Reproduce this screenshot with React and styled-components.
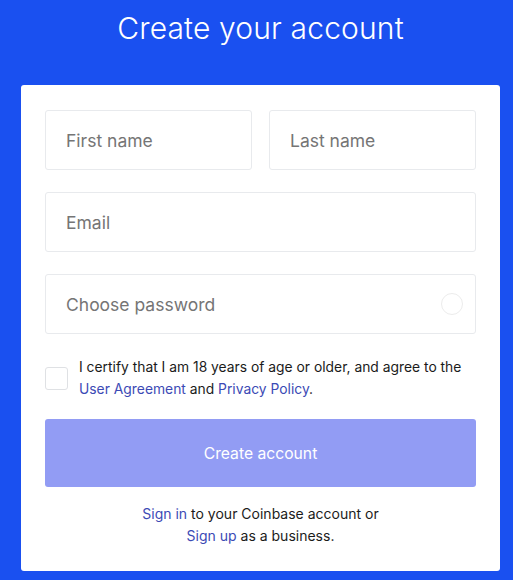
import React from "react";
import styled, { createGlobalStyle } from "styled-components";

const GlobalStyle = createGlobalStyle`
  html, body {
    margin: 0;
    padding: 0;
    background: #1a50f0;
    font-family: "Inter", "Liberation Sans", sans-serif;
  }
`;

const Page = styled.div`
  width: 513px;
  height: 580px;
  overflow: hidden;
  background: #1a50f0;
  display: flex;
  flex-direction: column;
  align-items: center;
`;

const Title = styled.h1`
  flex: none;
  margin: 10px 0 0 8px;
  height: 75px;
  color: #fff;
  font-size: 30px;
  font-weight: 300;
  letter-spacing: 0.15px;
  line-height: 36px;
`;

const Card = styled.div`
  flex: none;
  width: 479px;
  box-sizing: border-box;
  margin-left: 8px;
  background: #fff;
  border-radius: 3px;
  padding: 25px 24px 24px;
  display: flex;
  flex-direction: column;
`;

const Row = styled.div`
  display: flex;
  gap: 17px;
  margin-bottom: 22px;
`;

const Field = styled.div`
  position: relative;
  flex: 1;
  height: 60px;
  box-sizing: border-box;
  border: 1px solid #e8eaed;
  border-radius: 3px;
  display: flex;
  align-items: center;
  padding: 0 20px;
  font-size: 17.5px;
  color: #757575;
`;

const Spinner = styled.span`
  position: absolute;
  right: 12px;
  top: 18px;
  width: 22px;
  height: 22px;
  box-sizing: border-box;
  border: 1px solid #ececec;
  border-radius: 50%;
`;

const Consent = styled.div`
  display: flex;
  align-items: center;
  gap: 11px;
  margin: 0 0 19px;
`;

const Box = styled.span`
  flex: none;
  width: 23px;
  height: 23px;
  box-sizing: border-box;
  border: 1px solid #dfe1e4;
  border-radius: 3px;
`;

const Small = styled.p`
  margin: 0;
  font-size: ${(p) => p.$size || "14px"};
  line-height: 22px;
  color: #1b1b1b;
  text-align: ${(p) => p.$align || "left"};
`;

const Link = styled.a`
  color: #3c4ab5;
  text-decoration: none;
`;

const Button = styled.button`
  height: 68px;
  border: none;
  border-radius: 3px;
  background: #929cf4;
  color: #fff;
  font-family: inherit;
  font-size: 15.7px;
  margin-bottom: 16px;
`;

function App() {
  return (
    <Page>
      <GlobalStyle />
      <Title>Create your account</Title>
      <Card>
        <Row>
          <Field>First name</Field>
          <Field>Last name</Field>
        </Row>
        <Row>
          <Field>Email</Field>
        </Row>
        <Row>
          <Field>
            Choose password
            <Spinner />
          </Field>
        </Row>
        <Consent>
          <Box />
          <Small $size="13.85px">
            I certify that I am 18 years of age or older, and agree to the
            <br />
            <Link>User Agreement</Link> and <Link>Privacy Policy</Link>.
          </Small>
        </Consent>
        <Button>Create account</Button>
        <Small $align="center">
          <Link>Sign in</Link> to your Coinbase account or
          <br />
          <Link>Sign up</Link> as a business.
        </Small>
      </Card>
    </Page>
  );
}

export default App;
